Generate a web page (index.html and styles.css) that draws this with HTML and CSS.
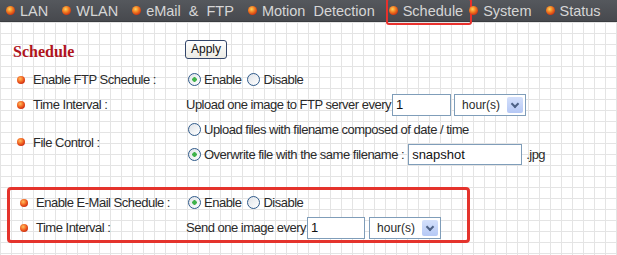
FILE: index.html
```html
<!DOCTYPE html>
<html lang="en">
<head>
<meta charset="UTF-8">
<title>Schedule</title>
<link rel="stylesheet" href="styles.css">
</head>
<body>
<div class="menu">
    <span class="menu-item"><span class="dot"></span>LAN</span>
    <span class="menu-item"><span class="dot"></span>WLAN</span>
    <span class="menu-item"><span class="dot"></span>eMail &amp; FTP</span>
    <span class="menu-item"><span class="dot"></span>Motion Detection</span>
    <span class="menu-item current"><span class="dot"></span>Schedule</span>
    <span class="menu-item"><span class="dot"></span>System</span>
    <span class="menu-item"><span class="dot"></span>Status</span>
</div>

<div class="content">
    <div class="head-row">
        <h2 class="title">Schedule</h2>
        <button class="apply">Apply</button>
    </div>

    <div class="row">
        <div class="label"><span class="bullet"></span>Enable FTP Schedule :</div>
        <div class="field">
            <label><input type="radio" name="ftp" checked>Enable</label>
            <label><input type="radio" name="ftp">Disable</label>
        </div>
    </div>
    <div class="row">
        <div class="label"><span class="bullet"></span>Time Interval :</div>
        <div class="field">
            Upload one image to FTP server every
            <input class="text ftp-num" type="text" value="1">
            <span class="select ftp-sel">hour(s)<span class="arrow"></span></span>
        </div>
    </div>
    <div class="row">
        <div class="label"><span class="bullet"></span>File Control :</div>
        <div class="field stack">
            <label><input type="radio" name="file">Upload files with filename composed of date / time</label>
            <label><input type="radio" name="file" checked>Overwrite file with the same filename :
                <input class="text name" type="text" value="snapshot"> .jpg</label>
        </div>
    </div>

    <div class="mail-box">
        <div class="row">
            <div class="label"><span class="bullet"></span>Enable E-Mail Schedule :</div>
            <div class="field">
                <label><input type="radio" name="mail" checked>Enable</label>
                <label><input type="radio" name="mail">Disable</label>
            </div>
        </div>
        <div class="row">
            <div class="label"><span class="bullet"></span>Time Interval :</div>
            <div class="field">
                Send one image every
                <input class="text mail-num" type="text" value="1">
                <span class="select mail-sel">hour(s)<span class="arrow"></span></span>
            </div>
        </div>
    </div>
</div>
</body>
</html>
```

FILE: styles.css
```css
body {
    margin: 0;
    font-family: "Liberation Sans", Arial, sans-serif;
    font-size: 13px;
    letter-spacing: -0.5px;
    color: #2a2a2a;
    background-color: #fff;
    background-image:
        linear-gradient(to right, #e4e4e4 1px, transparent 1px),
        linear-gradient(to bottom, #e4e4e4 1px, transparent 1px);
    background-size: 11px 11px;
    height: 255px;
    overflow: hidden;
}

.menu {
    display: flex;
    height: 21px;
    padding-left: 6px;
    background: linear-gradient(#55585d, #47494e);
    border-bottom: 1px solid #3a3c40;
    letter-spacing: 0;
    word-spacing: 4px;
}

.menu-item {
    display: flex;
    align-items: center;
    flex-shrink: 0;
    white-space: nowrap;
    color: #d6d6d6;
    font-size: 14.5px;
    margin-right: 14px;
    position: relative;
}

.menu-item.current {
    margin-right: 6px;
}

.menu-item.current::after {
    content: "";
    position: absolute;
    left: -3px;
    right: -9px;
    top: -2px;
    bottom: -4px;
    border: 2px solid #e8302c;
    border-radius: 3px;
}

.dot {
    display: inline-block;
    width: 9px;
    height: 9px;
    border-radius: 50%;
    margin-right: 5px;
    background: radial-gradient(circle at 40% 35%, #ffd25a 0, #f07a20 40%, #c82a10 80%);
}

.content {
    padding: 16px 0 0 7px;
}

.head-row {
    display: flex;
    align-items: center;
    height: 22px;
    margin-bottom: 7px;
}

.title {
    margin: 6px 0 0 6px;
    width: 172px;
    font-family: "Liberation Serif", "Times New Roman", serif;
    font-size: 16px;
    letter-spacing: 0;
    color: #b0141c;
}

.apply {
    font-family: "Liberation Sans", Arial, sans-serif;
    font-size: 12px;
    letter-spacing: 0;
    height: 19px;
    padding: 0 5px;
    color: #111;
    border: 1px solid #33466a;
    border-radius: 3px;
    background: linear-gradient(#ffffff, #ecebe4);
}

.row {
    display: flex;
    align-items: center;
    min-height: 25px;
}

.label {
    width: 179px;
    display: flex;
    align-items: center;
    padding-left: 10px;
    box-sizing: border-box;
}

.bullet {
    display: inline-block;
    width: 8px;
    height: 8px;
    border-radius: 50%;
    margin-right: 8px;
    background: radial-gradient(circle at 40% 35%, #ffc060 0, #f06020 45%, #c01c0c 85%);
}

.field {
    display: flex;
    align-items: center;
    white-space: nowrap;
}

.field label {
    display: flex;
    align-items: center;
    margin-right: 4px;
}

.stack {
    flex-direction: column;
    align-items: flex-start;
}

.stack label {
    height: 25px;
}

input[type="radio"] {
    appearance: none;
    width: 13px;
    height: 13px;
    margin: 0 3px 0 2px;
    border: 1px solid #2f5a8a;
    border-radius: 50%;
    background: linear-gradient(135deg, #dfe3e8, #ffffff);
    box-sizing: border-box;
}

input[type="radio"]:checked {
    background: radial-gradient(circle, #3fb24a 0, #3fb24a 2px, transparent 2.5px),
        linear-gradient(135deg, #dfe3e8, #ffffff);
}

.text {
    font-family: "Liberation Sans", Arial, sans-serif;
    font-size: 13px;
    height: 22px;
    box-sizing: border-box;
    border: 1px solid #7f9db9;
    padding: 0 3px;
    margin: 0 3px 0 1px;
    color: #111;
    background: #fff;
}

.ftp-num { width: 59px; }
.mail-num { width: 58px; }
.name { width: 114px; height: 21px; margin-left: 4px; margin-right: 4px; }

.select {
    position: relative;
    display: inline-flex;
    align-items: center;
    height: 22px;
    box-sizing: border-box;
    border: 1px solid #7f9db9;
    padding-left: 7px;
    font-size: 12px;
    letter-spacing: 0;
    background: #fff;
}

.ftp-sel { width: 72px; }
.mail-sel { width: 72px; margin-left: 1px; }

.arrow {
    position: absolute;
    right: 2px;
    top: 2px;
    width: 16px;
    height: 16px;
    border-radius: 2px;
    background: linear-gradient(#d4e0fb, #b5c8f5);
}

.arrow::after {
    content: "";
    position: absolute;
    left: 5px;
    top: 4px;
    width: 4px;
    height: 4px;
    border-right: 2px solid #4d6185;
    border-bottom: 2px solid #4d6185;
    transform: rotate(45deg);
}

.mail-box {
    margin-top: 20px;
    width: 463px;
    box-sizing: border-box;
    border: 3px solid #e4332c;
    border-radius: 4px;
    padding: 0;
}

.mail-box .label {
    width: 176px;
}
```
